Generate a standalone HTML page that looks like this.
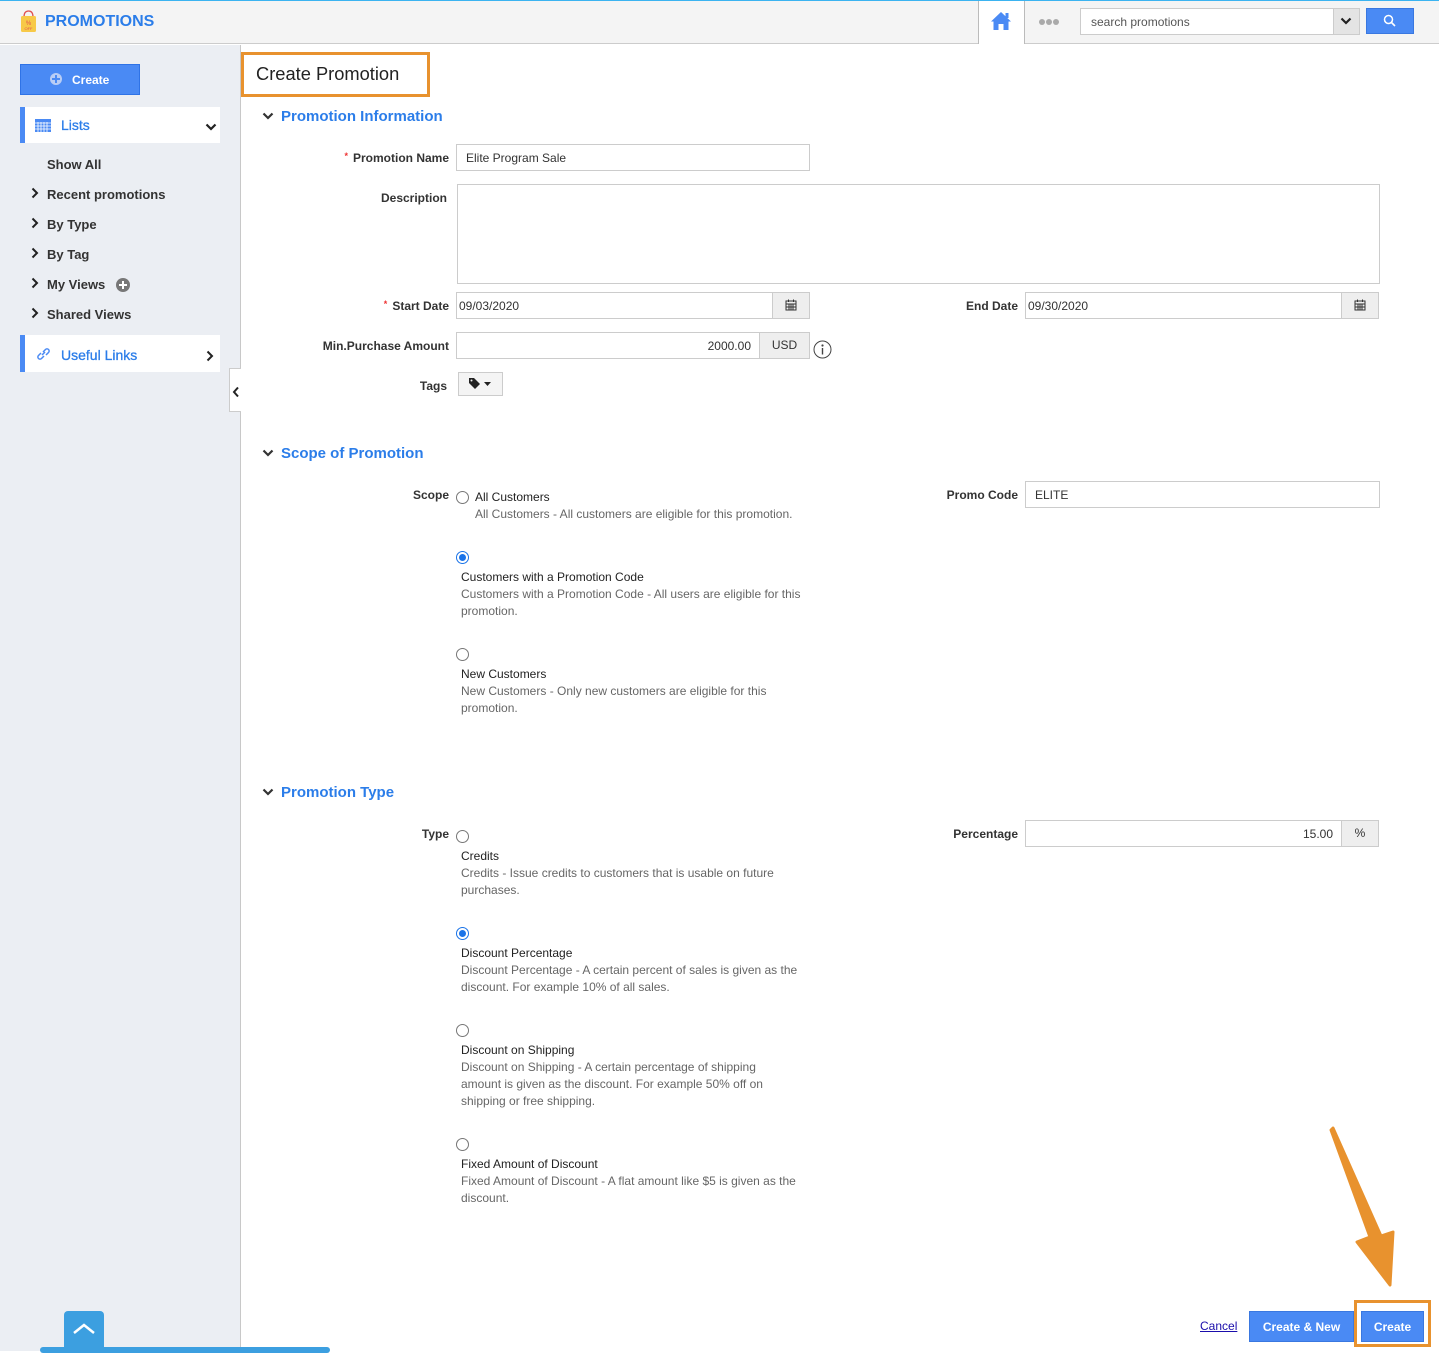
<!DOCTYPE html>
<html><head><meta charset="utf-8"><style>
*{box-sizing:border-box;margin:0;padding:0}
body{width:1439px;height:1351px;position:relative;overflow:hidden;font-family:"Liberation Sans",Arial,sans-serif;font-size:12px;color:#333;background:#fff}
.a{position:absolute}
.lbl{position:absolute;font-weight:bold;font-size:12px;color:#333;text-align:right;white-space:nowrap}
.req{color:#e33;font-size:9px;vertical-align:top;margin-right:5px}
.inp{position:absolute;border:1px solid #ccc;background:#fff;font-size:12px;color:#333;padding:0 9px;line-height:26px;height:27px}
.addon{position:absolute;border:1px solid #ccc;background:#eee;height:27px;text-align:center;line-height:25px;color:#333}
.sec{position:absolute;left:262px;font-size:15px;font-weight:bold;color:#2b7de9}
.sec svg{position:absolute;left:0;top:4px}
.sec span{margin-left:19px}
.radio{position:absolute;width:13px;height:13px;border:1px solid #777;border-radius:50%;background:#fff}
.radio.on{border-color:#1a73e8}
.radio.on:after{content:"";position:absolute;left:2px;top:2px;width:7px;height:7px;border-radius:50%;background:#1a73e8}
.rt{position:absolute;font-size:12px;color:#222;line-height:17px;top:1px}
.rd{position:absolute;font-size:12px;color:#666;line-height:17px;width:360px}
.nav{position:absolute;left:47px;font-size:13px;font-weight:bold;color:#333}
.chev{position:absolute;left:31px}
</style></head><body>
<div class="a" style="left:0;top:0;width:1439px;height:44px;background:#f4f4f4;border-top:1px solid #3bb3f0;border-bottom:1px solid #ccc"></div>
<svg class="a" style="left:20px;top:9px" width="17" height="24" viewBox="0 0 17 24"><path d="M4 8 Q4 2 8.5 2 Q13 2 13 8" fill="none" stroke="#e05050" stroke-width="1.3"/><rect x="1" y="7" width="15" height="16" rx="1.5" fill="#f7c948"/><text x="8.5" y="16" font-size="6" text-anchor="middle" fill="#e05050" font-family="Liberation Sans">%</text><text x="8.5" y="21" font-size="4" text-anchor="middle" fill="#e05050" font-family="Liberation Sans">OFF</text></svg>
<div class="a" style="left:45px;top:13px;font-size:16px;font-weight:bold;color:#2b7de9">PROMOTIONS</div>
<div class="a" style="left:978px;top:1px;width:47px;height:43px;background:#fff;border-left:1px solid #bbb;border-right:1px solid #bbb"></div>
<svg class="a" style="left:990px;top:10px" width="22" height="22" viewBox="0 0 22 22"><path d="M11 2 L1 11.5 L3.5 11.5 L3.5 20 L8.5 20 L8.5 14 L13.5 14 L13.5 20 L18.5 20 L18.5 11.5 L21 11.5 Z" fill="#4a8af4"/><rect x="15.5" y="3" width="3" height="5" fill="#4a8af4"/></svg>
<div class="a" style="left:1039px;top:19px;width:6px;height:6px;border-radius:50%;background:#aaa;box-shadow:7px 0 #aaa,14px 0 #aaa"></div>
<div class="a" style="left:1080px;top:8px;width:254px;height:27px;border:1px solid #ccc;background:#fff;color:#555;font-size:12px;line-height:26px;padding-left:10px">search promotions</div>
<div class="a" style="left:1333px;top:8px;width:27px;height:27px;border:1px solid #ccc;background:#e4e4e4"></div>
<svg class="a" style="left:1340px;top:17px" width="12" height="9" viewBox="0 0 12 9"><path d="M1.5 1.5 L6 6 L10.5 1.5" fill="none" stroke="#222" stroke-width="2.2"/></svg>
<div class="a" style="left:1366px;top:8px;width:48px;height:26px;background:#4a8af4;border:1px solid #3a78e0"></div>
<svg class="a" style="left:1383px;top:14px" width="14" height="14" viewBox="0 0 14 14"><circle cx="5.5" cy="5.5" r="4" fill="none" stroke="#fff" stroke-width="1.5"/><path d="M8.5 8.5 L12 12" stroke="#fff" stroke-width="1.6"/></svg>
<div class="a" style="left:0;top:45px;width:241px;height:1306px;background:#ebeef3;border-right:1px solid #c8c8c8"></div>
<div class="a" style="left:20px;top:64px;width:120px;height:31px;background:#4a8af4;border:1px solid #2f73e6;color:#fff;font-weight:bold;font-size:12px;line-height:30px;padding-left:51px">Create</div>
<div class="a" style="left:50px;top:73px;width:12px;height:12px;border-radius:50%;background:#b8cdf5"></div>
<div class="a" style="left:55px;top:75px;width:2px;height:8px;background:#4a8af4"></div><div class="a" style="left:52px;top:78px;width:8px;height:2px;background:#4a8af4"></div>
<div class="a" style="left:20px;top:107px;width:200px;height:36px;background:#fff;border-left:5px solid #4a8af4"></div>
<svg class="a" style="left:35px;top:119px" width="16" height="13" viewBox="0 0 16 13"><rect x="0" y="0" width="16" height="13" fill="#4a8af4"/><g stroke="#fff" stroke-width="0.8"><path d="M0 4H16M0 7H16M0 10H16M3 3V13M6 3V13M9 3V13M12 3V13"/></g></svg>
<div class="a" style="left:61px;top:117px;font-size:14px;color:#2b7de9;-webkit-text-stroke:0.3px #2b7de9">Lists</div>
<svg class="a" style="left:205px;top:123px" width="12" height="9" viewBox="0 0 12 9"><path d="M1.5 1.5 L6 6 L10.5 1.5" fill="none" stroke="#222" stroke-width="2.2"/></svg>
<div class="nav" style="top:157px">Show All</div>
<svg class="chev" style="top:187px" width="8" height="12" viewBox="0 0 8 12"><path d="M1.5 1.5 L6 6 L1.5 10.5" fill="none" stroke="#222" stroke-width="2"/></svg><div class="nav" style="top:187px">Recent promotions</div>
<svg class="chev" style="top:217px" width="8" height="12" viewBox="0 0 8 12"><path d="M1.5 1.5 L6 6 L1.5 10.5" fill="none" stroke="#222" stroke-width="2"/></svg><div class="nav" style="top:217px">By Type</div>
<svg class="chev" style="top:247px" width="8" height="12" viewBox="0 0 8 12"><path d="M1.5 1.5 L6 6 L1.5 10.5" fill="none" stroke="#222" stroke-width="2"/></svg><div class="nav" style="top:247px">By Tag</div>
<svg class="chev" style="top:277px" width="8" height="12" viewBox="0 0 8 12"><path d="M1.5 1.5 L6 6 L1.5 10.5" fill="none" stroke="#222" stroke-width="2"/></svg><div class="nav" style="top:277px">My Views</div>
<div class="a" style="left:116px;top:278px;width:14px;height:14px;border-radius:50%;background:#777"></div><div class="a" style="left:122px;top:281px;width:2px;height:8px;background:#fff"></div><div class="a" style="left:119px;top:284px;width:8px;height:2px;background:#fff"></div>
<svg class="chev" style="top:307px" width="8" height="12" viewBox="0 0 8 12"><path d="M1.5 1.5 L6 6 L1.5 10.5" fill="none" stroke="#222" stroke-width="2"/></svg><div class="nav" style="top:307px">Shared Views</div>
<div class="a" style="left:20px;top:335px;width:200px;height:37px;background:#fff;border-left:5px solid #4a8af4"></div>
<svg class="a" style="left:36px;top:347px" width="15" height="14" viewBox="0 0 15 14"><g fill="none" stroke="#4a8af4" stroke-width="1.5"><path d="M6 8 L9 5"/><path d="M5 6 L2.5 8.5 A2 2 0 0 0 5.5 11.5 L8 9"/><path d="M7 5 L9.5 2.5 A2 2 0 0 1 12.5 5.5 L10 8"/></g></svg>
<div class="a" style="left:61px;top:347px;font-size:14px;color:#2b7de9;-webkit-text-stroke:0.3px #2b7de9">Useful Links</div>
<svg class="a" style="left:206px;top:350px" width="8" height="12" viewBox="0 0 8 12"><path d="M1.5 1.5 L6 6 L1.5 10.5" fill="none" stroke="#222" stroke-width="2"/></svg>
<div class="a" style="left:229px;top:368px;width:12px;height:44px;background:#fff;border:1px solid #ccc;border-right:none"></div>
<svg class="a" style="left:232px;top:386px" width="8" height="12" viewBox="0 0 8 12"><path d="M6 1.5 L2 6 L6 10.5" fill="none" stroke="#222" stroke-width="2"/></svg>
<div class="a" style="left:64px;top:1311px;width:40px;height:40px;background:#3c9fe0;border-radius:4px 4px 0 0"></div>
<svg class="a" style="left:72px;top:1322px" width="24" height="14" viewBox="0 0 24 14"><path d="M2 11 L12 3 L22 11" fill="none" stroke="#fff" stroke-width="2.5"/></svg>
<div class="a" style="left:40px;top:1347px;width:290px;height:6px;background:#3c9fe0;border-radius:3px"></div>
<div class="a" style="left:241px;top:52px;width:189px;height:45px;border:3px solid #e8922e;background:#fff"></div>
<div class="a" style="left:256px;top:63px;font-size:18.3px;color:#222">Create Promotion</div>
<div class="sec" style="top:108px"><svg width="12" height="9" viewBox="0 0 12 9"><path d="M1.5 1.5 L6 6 L10.5 1.5" fill="none" stroke="#333" stroke-width="2.2"/></svg><span>Promotion Information</span></div>
<div class="lbl" style="right:990px;top:151px"><span class="req">*</span>Promotion Name</div>
<div class="inp" style="left:456px;top:144px;width:354px">Elite Program Sale</div>
<div class="lbl" style="right:992px;top:191px">Description</div>
<div class="inp" style="left:457px;top:184px;width:923px;height:100px"></div>
<div class="lbl" style="right:990px;top:299px"><span class="req">*</span>Start Date</div>
<div class="inp" style="left:456px;top:292px;width:318px;padding-left:2px">09/03/2020</div>
<div class="addon" style="left:772px;top:292px;width:38px"><svg width="12" height="12" viewBox="0 0 12 12" style="margin-top:6px"><rect x="1" y="2" width="10" height="9" fill="none" stroke="#333"/><path d="M1 5H11M4 5V11M6 5V11M8 5V11M1 8H11M3.5 0.5V3M8.5 0.5V3" stroke="#333"/></svg></div>
<div class="lbl" style="right:421px;top:299px">End Date</div>
<div class="inp" style="left:1025px;top:292px;width:318px;padding-left:2px">09/30/2020</div>
<div class="addon" style="left:1341px;top:292px;width:38px"><svg width="12" height="12" viewBox="0 0 12 12" style="margin-top:6px"><rect x="1" y="2" width="10" height="9" fill="none" stroke="#333"/><path d="M1 5H11M4 5V11M6 5V11M8 5V11M1 8H11M3.5 0.5V3M8.5 0.5V3" stroke="#333"/></svg></div>
<div class="lbl" style="right:990px;top:339px">Min.Purchase Amount</div>
<div class="inp" style="left:456px;top:332px;width:305px;text-align:right">2000.00</div>
<div class="addon" style="left:759px;top:332px;width:51px">USD</div>
<svg class="a" style="left:813px;top:340px" width="19" height="19" viewBox="0 0 19 19"><circle cx="9.5" cy="9.5" r="8.5" fill="none" stroke="#444" stroke-width="1"/><circle cx="9.5" cy="5.5" r="1.1" fill="#444"/><path d="M9.5 8V14.5" stroke="#444" stroke-width="1.4"/></svg>
<div class="lbl" style="right:992px;top:379px">Tags</div>
<div class="a" style="left:458px;top:372px;width:45px;height:24px;border:1px solid #ccc;background:#f4f4f4"></div>
<svg class="a" style="left:468px;top:377px" width="26" height="13" viewBox="0 0 26 13"><path d="M1 1 H6 L12 7 L7 12 L1 6 Z" fill="#222"/><circle cx="3.5" cy="3.5" r="1" fill="#f4f4f4"/><path d="M16 5 H23 L19.5 9 Z" fill="#222"/></svg>
<div class="sec" style="top:445px"><svg width="12" height="9" viewBox="0 0 12 9"><path d="M1.5 1.5 L6 6 L10.5 1.5" fill="none" stroke="#333" stroke-width="2.2"/></svg><span>Scope of Promotion</span></div>
<div class="lbl" style="right:990px;top:488px">Scope</div>
<div class="radio" style="left:456px;top:491px"></div>
<div class="rt" style="left:475px;top:489px">All Customers</div>
<div class="rd" style="left:475px;top:506px;width:400px">All Customers - All customers are eligible for this promotion.</div>
<div class="radio on" style="left:456px;top:551px"></div>
<div class="rt" style="left:461px;top:569px">Customers with a Promotion Code</div>
<div class="rd" style="left:461px;top:586px">Customers with a Promotion Code - All users are eligible for this promotion.</div>
<div class="radio" style="left:456px;top:648px"></div>
<div class="rt" style="left:461px;top:666px">New Customers</div>
<div class="rd" style="left:461px;top:683px;width:330px">New Customers - Only new customers are eligible for this promotion.</div>
<div class="lbl" style="right:421px;top:488px">Promo Code</div>
<div class="inp" style="left:1025px;top:481px;width:355px">ELITE</div>
<div class="sec" style="top:784px"><svg width="12" height="9" viewBox="0 0 12 9"><path d="M1.5 1.5 L6 6 L10.5 1.5" fill="none" stroke="#333" stroke-width="2.2"/></svg><span>Promotion Type</span></div>
<div class="lbl" style="right:990px;top:827px">Type</div>
<div class="radio" style="left:456px;top:830px"></div>
<div class="rt" style="left:461px;top:848px">Credits</div>
<div class="rd" style="left:461px;top:865px;width:340px">Credits - Issue credits to customers that is usable on future purchases.</div>
<div class="radio on" style="left:456px;top:927px"></div>
<div class="rt" style="left:461px;top:945px">Discount Percentage</div>
<div class="rd" style="left:461px;top:962px;width:350px">Discount Percentage - A certain percent of sales is given as the discount. For example 10% of all sales.</div>
<div class="radio" style="left:456px;top:1024px"></div>
<div class="rt" style="left:461px;top:1042px">Discount on Shipping</div>
<div class="rd" style="left:461px;top:1059px;width:320px">Discount on Shipping - A certain percentage of shipping amount is given as the discount. For example 50% off on shipping or free shipping.</div>
<div class="radio" style="left:456px;top:1138px"></div>
<div class="rt" style="left:461px;top:1156px">Fixed Amount of Discount</div>
<div class="rd" style="left:461px;top:1173px;width:350px">Fixed Amount of Discount - A flat amount like $5 is given as the discount.</div>
<div class="lbl" style="right:421px;top:827px">Percentage</div>
<div class="inp" style="left:1025px;top:820px;width:318px;text-align:right">15.00</div>
<div class="addon" style="left:1341px;top:820px;width:38px">%</div>
<svg class="a" style="left:1320px;top:1125px" width="80" height="165" viewBox="0 0 80 165"><path d="M11 5 L50 112 L37 117 L70 160 L73 107 L61 111 L13 3 Z" fill="#e8922e" stroke="#e8922e" stroke-width="3" stroke-linejoin="round"/></svg>
<div class="a" style="left:1200px;top:1319px;font-size:12px;color:#1a0dab;text-decoration:underline">Cancel</div>
<div class="a" style="left:1249px;top:1311px;width:105px;height:31px;background:#4a8af4;border:1px solid #3a78e0;color:#fff;font-weight:bold;text-align:center;line-height:30px">Create &amp; New</div>
<div class="a" style="left:1354px;top:1300px;width:77px;height:47px;border:3px solid #e8922e"></div>
<div class="a" style="left:1361px;top:1311px;width:63px;height:31px;background:#4a8af4;border:1px solid #3a78e0;color:#fff;font-weight:bold;text-align:center;line-height:30px">Create</div>
</body></html>
